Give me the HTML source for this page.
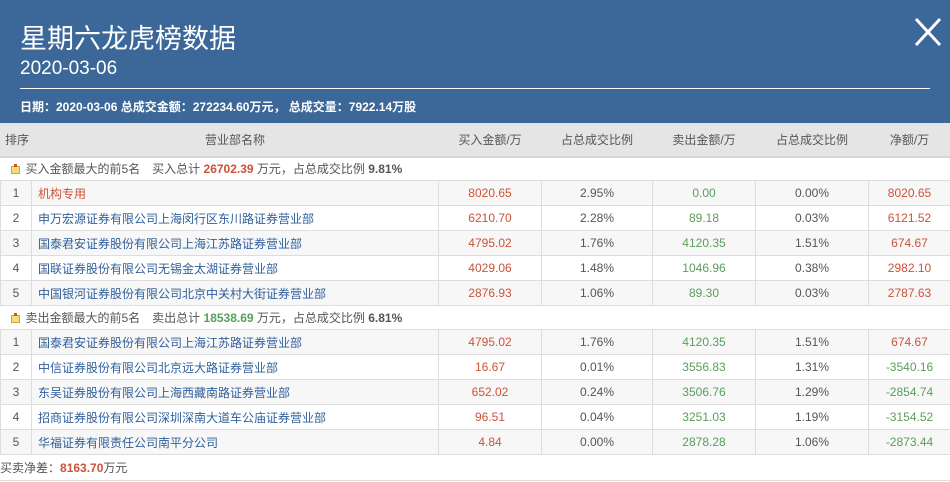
<!DOCTYPE html>
<html><head><meta charset="utf-8"><style>
*{margin:0;padding:0;box-sizing:border-box}
body{width:950px;height:482px;overflow:hidden;background:#fff;font-family:"Liberation Sans","Noto Sans CJK SC",sans-serif;font-size:12px;color:#555;position:relative}
.hd{position:absolute;left:0;top:0;width:950px;height:123px;background:#3c6899;color:#fff}
.t1{position:absolute;left:20px;top:22px;font-size:27px;line-height:34px}
.t2{position:absolute;left:20px;top:57px;font-size:19px;line-height:24px}
.ln{position:absolute;left:20px;top:88px;width:910px;height:1px;background:#fff}
.t3{position:absolute;left:20px;top:99px;font-size:12px;font-weight:bold;line-height:16px}
table{position:absolute;left:0;top:123px;width:950px;border-collapse:collapse;table-layout:fixed}
td,th{height:25px;border:1px solid #ddd;text-align:center;font-weight:normal;white-space:nowrap;overflow:hidden;padding:0}
th{height:33px;background:#e5e5e5;color:#555;border-color:#e5e5e5;border-bottom:2px solid #d6d6d6;font-size:12px}
td.n{text-align:left;padding-left:6px;color:#2f5f9b}
tr.o td{background:#f7f7f7}
.r{color:#cc5238}.g{color:#5a9e5a}
td.s{text-align:left;padding-left:10px;height:24px;border-left:none;border-right:none}
.ic{display:inline-block;width:9px;height:8px;background:#f3dc7a;border:1px solid #c9a83a;vertical-align:-1px;margin-right:6px;position:relative}
.ic:after{content:"";position:absolute;left:2px;top:-3px;width:3px;height:3px;background:#d05030}
.ft{position:absolute;left:0;top:455px;width:950px;height:26px;line-height:26px;border-bottom:1px solid #ddd}
b{font-weight:bold}
</style></head><body>
<div class="hd">
<div class="t1">星期六龙虎榜数据</div>
<div class="t2">2020-03-06</div>
<div class="ln"></div>
<div class="t3">日期：2020-03-06 总成交金额：272234.60万元， 总成交量：7922.14万股</div>
<svg style="position:absolute;left:913px;top:16px" width="30" height="32"><path d="M3 3L27 29M27 3L3 29" stroke="#fff" stroke-width="3"/></svg>
</div>
<table>
<colgroup><col style="width:31px"><col style="width:407px"><col style="width:103px"><col style="width:111px"><col style="width:103px"><col style="width:113px"><col style="width:82px"></colgroup>
<tr><th style="text-align:left;padding-left:4px">排序</th><th>营业部名称</th><th>买入金额/万</th><th>占总成交比例</th><th>卖出金额/万</th><th>占总成交比例</th><th>净额/万</th></tr>
<tr><td colspan="7" class="s"><span class="ic"></span>买入金额最大的前5名　买入总计 <b class="r">26702.39</b> 万元，占总成交比例 <b>9.81%</b></td></tr>
<tr class="o"><td>1</td><td class="n r" style="color:#cc5238">机构专用</td><td class="r">8020.65</td><td>2.95%</td><td class="g">0.00</td><td>0.00%</td><td class="r">8020.65</td></tr>
<tr><td>2</td><td class="n">申万宏源证券有限公司上海闵行区东川路证券营业部</td><td class="r">6210.70</td><td>2.28%</td><td class="g">89.18</td><td>0.03%</td><td class="r">6121.52</td></tr>
<tr class="o"><td>3</td><td class="n">国泰君安证券股份有限公司上海江苏路证券营业部</td><td class="r">4795.02</td><td>1.76%</td><td class="g">4120.35</td><td>1.51%</td><td class="r">674.67</td></tr>
<tr><td>4</td><td class="n">国联证券股份有限公司无锡金太湖证券营业部</td><td class="r">4029.06</td><td>1.48%</td><td class="g">1046.96</td><td>0.38%</td><td class="r">2982.10</td></tr>
<tr class="o"><td>5</td><td class="n">中国银河证券股份有限公司北京中关村大街证券营业部</td><td class="r">2876.93</td><td>1.06%</td><td class="g">89.30</td><td>0.03%</td><td class="r">2787.63</td></tr>
<tr><td colspan="7" class="s"><span class="ic"></span>卖出金额最大的前5名　卖出总计 <b class="g">18538.69</b> 万元，占总成交比例 <b>6.81%</b></td></tr>
<tr class="o"><td>1</td><td class="n">国泰君安证券股份有限公司上海江苏路证券营业部</td><td class="r">4795.02</td><td>1.76%</td><td class="g">4120.35</td><td>1.51%</td><td class="r">674.67</td></tr>
<tr><td>2</td><td class="n">中信证券股份有限公司北京远大路证券营业部</td><td class="r">16.67</td><td>0.01%</td><td class="g">3556.83</td><td>1.31%</td><td class="g">-3540.16</td></tr>
<tr class="o"><td>3</td><td class="n">东吴证券股份有限公司上海西藏南路证券营业部</td><td class="r">652.02</td><td>0.24%</td><td class="g">3506.76</td><td>1.29%</td><td class="g">-2854.74</td></tr>
<tr><td>4</td><td class="n">招商证券股份有限公司深圳深南大道车公庙证券营业部</td><td class="r">96.51</td><td>0.04%</td><td class="g">3251.03</td><td>1.19%</td><td class="g">-3154.52</td></tr>
<tr class="o"><td>5</td><td class="n">华福证券有限责任公司南平分公司</td><td class="r">4.84</td><td>0.00%</td><td class="g">2878.28</td><td>1.06%</td><td class="g">-2873.44</td></tr>
</table>
<div class="ft">买卖净差：<b class="r">8163.70</b>万元</div>
</body></html>
